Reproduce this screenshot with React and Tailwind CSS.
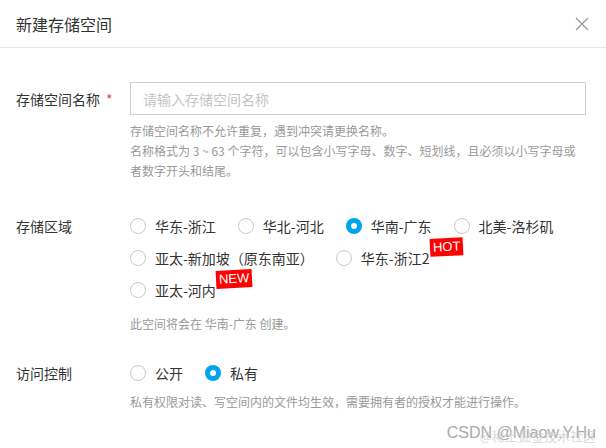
import { useState } from "react";

const font = { fontFamily: '"Noto Sans CJK SC", "Noto Sans", sans-serif' };

const regions = [
  [
    { id: "hz", label: "华东-浙江" },
    { id: "hb", label: "华北-河北" },
    { id: "gd", label: "华南-广东" },
    { id: "la", label: "北美-洛杉矶" },
  ],
  [
    { id: "sg", label: "亚太-新加坡（原东南亚）" },
    { id: "hz2", label: "华东-浙江2", badge: "HOT" },
  ],
  [{ id: "hn", label: "亚太-河内", badge: "NEW" }],
];

const Radio = ({ checked, label, badge, onClick }) => (
  <button
    type="button"
    onClick={onClick}
    className="flex items-center h-8 mr-[22px] cursor-pointer"
  >
    {checked ? (
      <span className="w-4 h-4 rounded-full bg-[#00a4ef] flex items-center justify-center">
        <span className="w-[6px] h-[6px] rounded-full bg-white" />
      </span>
    ) : (
      <span className="w-4 h-4 rounded-full border border-[#c8c8c8] bg-white" />
    )}
    <span className="relative ml-[9px] text-sm leading-5 text-[#333]">
      {label}
      {badge && (
        <span
          className="absolute left-full top-[-10px] h-[18px] px-[3px] bg-[#f00] text-white text-[13px] leading-[18px] -rotate-3"
          style={{ fontFamily: '"Liberation Sans", Arial, sans-serif' }}
        >
          {badge}
        </span>
      )}
    </span>
  </button>
);

const App = () => {
  const [region, setRegion] = useState("gd");
  const [access, setAccess] = useState("private");
  const regionName = regions.flat().find((r) => r.id === region).label;

  return (
    <div className="w-[606px] h-[448px] bg-white relative overflow-hidden" style={font}>
      <div className="h-12 flex items-center justify-between pl-4 pr-4 border-b border-[#e5e5e5]">
        <h2 className="text-base text-[#333]">新建存储空间</h2>
        <svg width="14" height="14" viewBox="0 0 14 14" className="mr-[1px]">
          <path d="M1 1L13 13M13 1L1 13" stroke="#999" strokeWidth="1.3" />
        </svg>
      </div>

      <div className="pl-4 pr-5 pt-[34px]">
        <div className="flex">
          <div className="w-[114px] h-[33px] flex items-center text-sm text-[#333]">
            存储空间名称<span className="ml-[6px] text-[#e5484d]">*</span>
          </div>
          <div className="flex-1">
            <input
              placeholder="请输入存储空间名称"
              className="w-full h-[33px] border border-[#d0d0d0] px-3 text-sm text-[#333] placeholder:text-[#c4c4c4] outline-none"
              style={font}
            />
            <div className="mt-[6px] text-xs leading-5 text-[#999]">
              <p>存储空间名称不允许重复，遇到冲突请更换名称。</p>
              <p>
                名称格式为 3 ~ 63 个字符，可以包含小写字母、数字、短划线，且必须以小写字母或者数字开头和结尾。
              </p>
            </div>
          </div>
        </div>

        <div className="flex mt-[29px]">
          <div className="w-[114px] h-8 flex items-center text-sm text-[#333]">存储区域</div>
          <div className="flex-1">
            {regions.map((row, i) => (
              <div key={i} className="flex">
                {row.map((r) => (
                  <Radio
                    key={r.id}
                    label={r.label}
                    badge={r.badge}
                    checked={region === r.id}
                    onClick={() => setRegion(r.id)}
                  />
                ))}
              </div>
            ))}
            <p className="mt-2 text-xs leading-5 text-[#999]">
              此空间将会在 {regionName} 创建。
            </p>
          </div>
        </div>

        <div className="flex mt-[23px]">
          <div className="w-[114px] h-8 flex items-center text-sm text-[#333]">访问控制</div>
          <div className="flex-1">
            <div className="flex">
              <Radio label="公开" checked={access === "public"} onClick={() => setAccess("public")} />
              <Radio label="私有" checked={access === "private"} onClick={() => setAccess("private")} />
            </div>
            <p className="mt-[3px] text-xs leading-5 text-[#999]">
              私有权限对读、写空间内的文件均生效，需要拥有者的授权才能进行操作。
            </p>
          </div>
        </div>
      </div>

      <div className="absolute right-[10px] bottom-[5px] text-base leading-5 text-[#aaa]">
        <span style={{ fontFamily: '"Liberation Sans", Arial, sans-serif' }}>CSDN @Miaow.Y.Hu</span>
        <span className="absolute right-0 top-[5px] text-[13px] text-[#ccc] opacity-70 whitespace-nowrap">@稀土掘金技术社区</span>
      </div>
    </div>
  );
};

export default App;
